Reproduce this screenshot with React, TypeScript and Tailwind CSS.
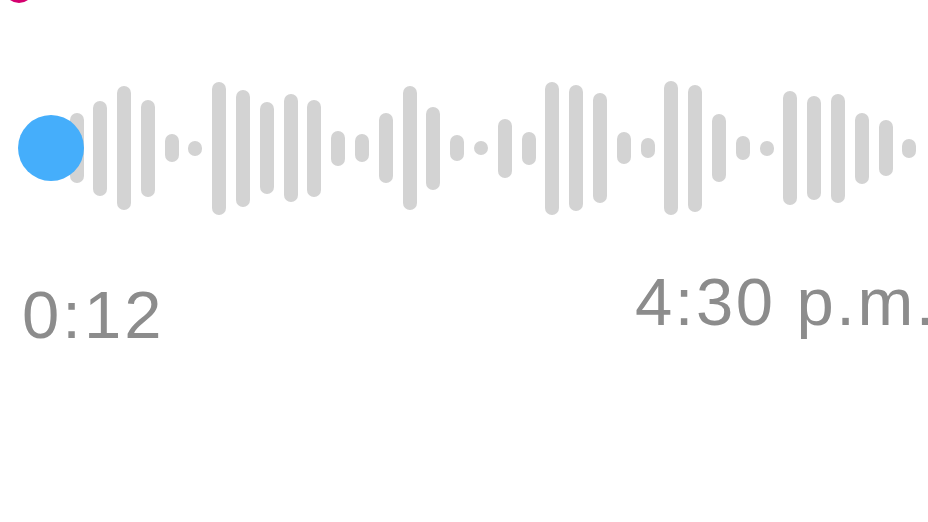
// Voice message bubble, zoomed in: play head, waveform, duration and time

const bars = [
  70, 95, 124, 97, 28, 15, 133, 117, 92, 108, 97, 35, 28, 70, 124, 83, 26, 14,
  59, 33, 133, 126, 110, 32, 20, 134, 127, 68, 24, 15, 114, 104, 109, 71, 56, 19,
];

function Waveform() {
  return (
    <div className="flex items-center gap-[9.8px] -ml-[14.5px]">
      {bars.map((h, i) => (
        <div
          key={i}
          className="w-[14px] shrink-0 rounded-full bg-[#d3d3d3]"
          style={{ height: h }}
        />
      ))}
    </div>
  );
}

export default function App() {
  return (
    <div className="w-[928px] h-[522px] bg-white overflow-hidden font-['Liberation_Sans',Arial,sans-serif]">
      {/* avatar edge peeking in from above */}
      <div className="-mt-[27px] ml-[4px] w-[30px] h-[30px] rounded-full bg-[#d4006e]" />

      {/* playback row */}
      <div className="mt-[75px] h-[140px] flex items-center pl-[18px]">
        <div className="relative z-10 w-[66px] h-[66px] shrink-0 rounded-full bg-[#45aefb]" />
        <Waveform />
      </div>

      {/* duration and sent time */}
      <div className="flex items-start pl-[22px] text-[67px] leading-none text-[#8c8c8c] whitespace-nowrap">
        <span className="w-[613px] shrink-0 mt-[63px] tracking-[3px]">0:12</span>
        <span className="mt-[50px] tracking-[2.5px]">4:30 p.m.</span>
      </div>
    </div>
  );
}
